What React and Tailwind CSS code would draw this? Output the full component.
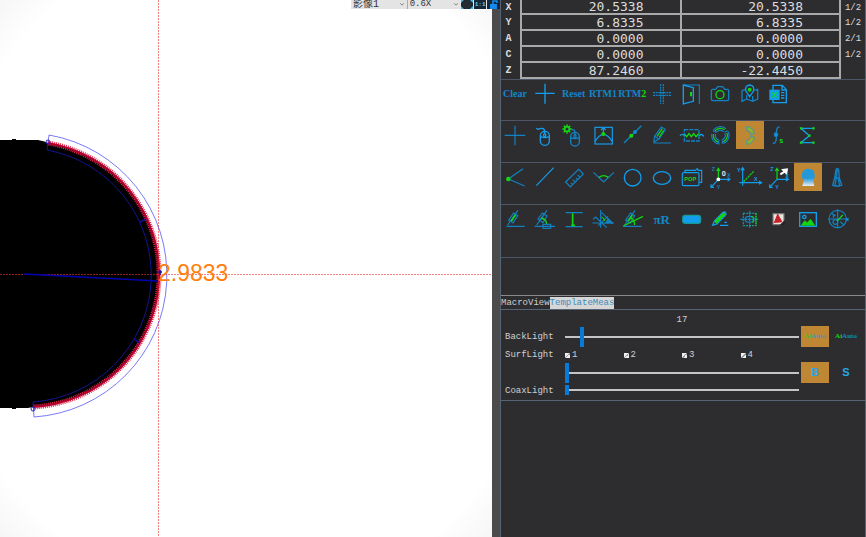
import React, { useState } from "react";

const B = "#1282c2";
const BRIGHT = "#129eec";
const G = "#12d812";

const axes = [
  { name: "X", a: "20.5338", b: "20.5338", ratio: "1/2" },
  { name: "Y", a: "6.8335", b: "6.8335", ratio: "1/2" },
  { name: "A", a: "0.0000", b: "0.0000", ratio: "2/1" },
  { name: "C", a: "0.0000", b: "0.0000", ratio: "1/2" },
  { name: "Z", a: "87.2460", b: "-22.4450", ratio: "" },
];

function Icon({ children, color = B, width = 3.5 }) {
  return (
    <svg viewBox="0 0 84 84" className="w-7 h-7 block" fill="none" stroke={color} strokeWidth={width}>
      {children}
    </svg>
  );
}

function Letter({ x, y, fill = BRIGHT, size = 16, children }) {
  return (
    <text x={x} y={y} fill={fill} stroke="none" fontSize={size} fontWeight="bold" fontFamily="Liberation Sans, sans-serif">
      {children}
    </text>
  );
}

// slanted gauge used by several of the angle tools
function Gauge() {
  return (
    <>
      <path d="M16 64H71M20 60L51 16" />
      <path d="M23 45L38 24L50 32L36 54Z" />
      <path d="M31 48L43 30" stroke={G} strokeWidth="5" />
    </>
  );
}

const rows = [
  [
    { label: "Clear", text: "Clear" },
    { label: "Cross", icon: <Icon color={BRIGHT} width={4}><path d="M16 40H74M45 11V71" /></Icon> },
    { label: "Reset", text: "Reset" },
    { label: "RTM1", text: "RTM1" },
    { label: "RTM2", text: "RTM", green: "2" },
    {
      label: "Grid cross",
      icon: (
        <Icon>
          <path d="M15 38H69M15 46H69M38 12V72M46 12V72" strokeDasharray="6 2" />
        </Icon>
      ),
    },
    {
      label: "Exit",
      icon: (
        <Icon>
          <path d="M20 15H67V72" />
          <path d="M19 15L49 23V64L19 72Z" stroke={BRIGHT} strokeWidth="4" />
          <path d="M42 36V49" stroke={G} strokeWidth="6" />
        </Icon>
      ),
    },
    {
      label: "Camera",
      icon: (
        <Icon width={4}>
          <path d="M20 28H29L35 20H50L56 28H64Q68 28 68 32V57Q68 62 63 62H21Q16 62 16 57V32Q16 28 20 28Z" />
          <circle cx="42" cy="44" r="12" stroke={G} />
        </Icon>
      ),
    },
    {
      label: "Map",
      icon: (
        <Icon width={4}>
          <path d="M28 28L18 32V64L32 57L50 64L65 57V28L55 31M32 57V46M50 64V48" />
          <path d="M41 50L30 34Q25 17 41 15Q57 17 52 34Z" stroke={BRIGHT} />
          <circle cx="41" cy="29" r="4" fill={G} stroke={G} />
        </Icon>
      ),
    },
    {
      label: "Export",
      icon: (
        <Icon color={BRIGHT} width={4}>
          <path d="M24 30V16H52L64 29V68H24V60M51 16V30H64M48 38H58M48 46H58M48 54H58" />
          <rect x="15" y="31" width="27" height="27" fill={BRIGHT} />
          <path d="M22 37L35 52M35 37L22 52" stroke={G} strokeWidth="4" />
        </Icon>
      ),
    },
  ],
  [
    { label: "Point", icon: <Icon><path d="M11 43H73M42 14V73" /></Icon> },
    {
      label: "Mouse",
      icon: (
        <Icon color={BRIGHT} width={4}>
          <rect x="31" y="31" width="27" height="42" rx="13" />
          <path d="M19 22Q24 27 29 23Q43 19 44 31V39M32 47Q45 53 57 47" />
          <rect x="41" y="38" width="6" height="9" rx="3" />
        </Icon>
      ),
    },
    {
      label: "Mouse light",
      icon: (
        <Icon width={4}>
          <rect x="32" y="34" width="26" height="41" rx="13" />
          <path d="M34 26Q44 24 45 34V42M33 50Q45 56 57 50" />
          <rect x="42" y="41" width="6" height="9" rx="3" />
          <circle cx="21" cy="24" r="7" stroke={G} strokeWidth="5" />
          <path d="M21 10V17M21 31V38M7 24H14M28 24H35M11 14L16 19M26 29L31 34M31 14L26 19M16 29L11 34" stroke={G} />
        </Icon>
      ),
    },
    {
      label: "Peak",
      icon: (
        <Icon color={BRIGHT}>
          <rect x="18" y="19" width="52" height="50" />
          <path d="M18 62Q43 18 70 62M43 19V36M36 27L43 20L50 27" />
          <circle cx="43" cy="39" r="4" fill={G} stroke={G} />
        </Icon>
      ),
    },
    {
      label: "Line point",
      icon: (
        <Icon width={4}>
          <path d="M18 66L70 14" />
          <circle cx="51" cy="33" r="4" fill={BRIGHT} />
          <circle cx="40" cy="44" r="4" fill={G} stroke={G} />
        </Icon>
      ),
    },
    {
      label: "Edge line",
      icon: (
        <Icon>
          <path d="M17 66H69M17 64L20 46L40 18L52 25L33 54L17 64M20 46L33 54" />
          <path d="M27 46L43 23M34 48L47 28" stroke={G} />
        </Icon>
      ),
    },
    {
      label: "Wave",
      icon: (
        <Icon width={4}>
          <rect x="22" y="26" width="44" height="34" strokeDasharray="12 3" />
          <path d="M9 44Q16 36 22 44M66 44Q74 36 80 46" stroke={BRIGHT} />
          <path d="M23 40L29 47L36 38L43 47L50 38L57 47L65 38" stroke={G} />
        </Icon>
      ),
    },
    {
      label: "Three arcs",
      icon: (
        <Icon>
          <circle cx="43" cy="43" r="26" strokeDasharray="43 11" transform="rotate(215 43 43)" />
          <circle cx="43" cy="43" r="15" strokeDasharray="25 6" transform="rotate(215 43 43)" />
          <circle cx="43" cy="43" r="21" stroke={G} strokeDasharray="32 12" transform="rotate(220 43 43)" />
          <path d="M21 29L30 34M65 29L56 34M38 68V59M49 68V59" />
        </Icon>
      ),
    },
    {
      label: "Arc scan",
      active: true,
      icon: (
        <Icon>
          <path d="M32 17Q50 18 56 37L45 41Q41 30 32 28Z" stroke="#5c9a86" />
          <path d="M32 70Q50 68 56 49L45 45Q41 56 32 59Z" stroke="#5c9a86" />
          <path d="M36 22Q46 25 50 35M36 65Q46 62 50 51" stroke="#7fc02c" strokeWidth="5" />
        </Icon>
      ),
    },
    {
      label: "Curve scan",
      icon: (
        <Icon width={4}>
          <path d="M44 19Q36 15 34 34V53Q32 70 23 66" />
          <circle cx="33" cy="41" r="5" fill={BRIGHT} />
          <Letter x={43} y={67} fill={G} size={22}>s</Letter>
        </Icon>
      ),
    },
    {
      label: "Sum",
      icon: (
        <Icon color={BRIGHT} width={4}>
          <path d="M59 22H21L46 44L21 65H59" />
          <path d="M18 22H25M55 22H62M43 44H50M18 65H25M55 65H62" stroke={G} strokeWidth="7" />
        </Icon>
      ),
    },
  ],
  [
    {
      label: "Vertex",
      icon: (
        <Icon>
          <path d="M22 48L66 17M22 48L71 69" />
          <circle cx="22" cy="48" r="5" fill={G} stroke={G} />
        </Icon>
      ),
    },
    { label: "Line", icon: <Icon color={BRIGHT}><path d="M19 68L71 14" /></Icon> },
    {
      label: "Ruler",
      icon: (
        <Icon>
          <path d="M17 57L56 19L70 33L31 72Z" />
          <path d="M38 65L33 60M46 57L38 50M53 50L48 45M60 43L53 36" />
        </Icon>
      ),
    },
    {
      label: "Angle",
      icon: (
        <Icon>
          <path d="M13 28L44 57L75 28" />
          <path d="M30 43Q44 33 58 43" stroke={G} strokeWidth="4" />
        </Icon>
      ),
    },
    { label: "Circle", icon: <Icon color={BRIGHT} width={4}><circle cx="44" cy="44" r="25" /></Icon> },
    { label: "Ellipse", icon: <Icon color={BRIGHT} width={4}><ellipse cx="42" cy="45" rx="26" ry="19" /></Icon> },
    {
      label: "Popup",
      icon: (
        <Icon color={BRIGHT}>
          <rect x="16" y="29" width="50" height="39" rx="4" />
          <path d="M24 28V22H55L61 17L64 22H74V58H67" />
          <Letter x={22} y={55} fill={G} size={17}>POP</Letter>
        </Icon>
      ),
    },
    {
      label: "Zero axes",
      icon: (
        <Icon color={BRIGHT}>
          <path d="M37 49V18M32 24L37 16L42 24" stroke={G} />
          <path d="M37 49H71M65 44L72 49L65 54M37 49L15 73M15 64V73H24" />
          <circle cx="37" cy="49" r="4" fill="white" stroke="white" />
          <Letter x={17} y={24} fill={B}>Z</Letter>
          <Letter x={63} y={42} fill={B}>X</Letter>
          <Letter x={32} y={79} fill={B}>Y</Letter>
          <Letter x={47} y={38} fill="#e8e8e8" size={22}>0</Letter>
        </Icon>
      ),
    },
    {
      label: "Axes",
      icon: (
        <Icon color={BRIGHT}>
          <path d="M20 68V15M15 22L20 14L25 22M10 59H76M69 54L77 59L69 64" />
          <path d="M23 56L53 25" stroke={G} strokeDasharray="7 2" />
          <Letter x={3} y={27}>Y</Letter>
          <Letter x={54} y={53}>X</Letter>
        </Icon>
      ),
    },
    {
      label: "Move axes",
      icon: (
        <Icon color={BRIGHT}>
          <path d="M36 49V18M31 24L36 16L41 24" stroke={G} />
          <path d="M36 49H69M63 44L70 49L63 54M36 49L14 73M14 64V73H23" />
          <path d="M46 34L60 25" stroke="white" strokeWidth="6" />
          <path d="M52 20L67 18L65 33Z" fill="white" stroke="white" />
          <Letter x={16} y={25}>Z</Letter>
          <Letter x={61} y={44}>X</Letter>
          <Letter x={31} y={79}>Y</Letter>
        </Icon>
      ),
    },
    {
      label: "Back light",
      active: true,
      icon: (
        <Icon>
          <defs>
            <linearGradient id="lamp" x1="0" y1="0" x2="0" y2="1">
              <stop offset="0.55" stopColor="#2598da" />
              <stop offset="1" stopColor="#e8eef0" />
            </linearGradient>
          </defs>
          <path d="M24 35Q24 17 43 17Q62 17 62 35V44L57 52L61 69H25L29 52L24 44Z" fill="url(#lamp)" stroke="none" />
        </Icon>
      ),
    },
    {
      label: "Probe",
      icon: (
        <Icon width={4}>
          <path d="M36 20Q41 13 44 20L46 45L53 66L45 69H33L26 66L32 45ZM40 20L37 45L33 67M43 45L46 67M32 45H46" />
        </Icon>
      ),
    },
  ],
  [
    { label: "Incline", icon: <Icon><Gauge /></Icon> },
    {
      label: "Incline box",
      icon: (
        <Icon>
          <path d="M14 64H75M20 60L51 16" />
          <path d="M24 42L37 24L51 33L39 53ZM30 45L43 27" />
          <path d="M33 39Q49 42 50 57" stroke={G} strokeWidth="4" />
          <rect x="39" y="58" width="23" height="12" />
        </Icon>
      ),
    },
    {
      label: "Height",
      icon: (
        <Icon>
          <path d="M17 23H68M17 65H68" />
          <path d="M38 25V63M34 61H45" stroke={G} strokeWidth="5" />
        </Icon>
      ),
    },
    {
      label: "Intersect",
      icon: (
        <Icon>
          <path d="M10 54H75M35 15V68M12 43L20 36L53 68M38 23L70 54M28 62L57 34" />
          <path d="M58 42L70 54H50Z" fill={B} />
          <path d="M38 36Q46 39 47 48" stroke={G} />
        </Icon>
      ),
    },
    {
      label: "Bisector",
      icon: (
        <Icon>
          <Gauge />
          <path d="M16 63L75 34M36 37Q50 44 50 60" stroke={G} strokeWidth="4" />
        </Icon>
      ),
    },
    { label: "Radius", big: "πR" },
    {
      label: "Slot",
      icon: (
        <Icon>
          <rect x="17" y="31" width="54" height="24" rx="8" fill={BRIGHT} stroke="#169a96" />
        </Icon>
      ),
    },
    {
      label: "Edit",
      icon: (
        <Icon color={BRIGHT} width={4}>
          <path d="M20 61L25 48L51 22L57 21L60 25L59 30L33 57ZM42 61H67M55 52H63" />
          <path d="M28 53L56 25" stroke={G} strokeWidth="9" />
        </Icon>
      ),
    },
    {
      label: "Align",
      icon: (
        <Icon>
          <path d="M13 43H68M41 17V68" strokeDasharray="9 2" />
          <rect x="22" y="25" width="38" height="37" strokeDasharray="6 3" stroke="#169a96" />
          <rect x="28" y="35" width="26" height="16" rx="7" />
          <path d="M46 35H52V51H46M60 25V62" stroke={G} strokeDasharray="5 2" />
        </Icon>
      ),
    },
    {
      label: "Report",
      icon: (
        <Icon>
          <rect x="24" y="26" width="33" height="33" fill="#e9e5df" stroke="#777" />
          <path d="M29 52L38 29L50 50Z" fill="#c8202a" stroke="#c8202a" />
          <path d="M47 60L58 49V60Z" fill="#222" stroke="#222" />
        </Icon>
      ),
    },
    {
      label: "Image",
      icon: (
        <Icon color={BRIGHT} width={4}>
          <rect x="17" y="23" width="50" height="41" />
          <path d="M22 61L32 47L39 53L50 43L62 61Z" fill={G} stroke={G} strokeWidth="2" />
          <circle cx="31" cy="36" r="5" />
        </Icon>
      ),
    },
    {
      label: "Compass",
      icon: (
        <Icon>
          <circle cx="41" cy="42" r="26" />
          <path d="M12 42H74M41 13V70M23 24L33 34M49 50L59 60M28 30H36M28 30V38" />
          <circle cx="34" cy="51" r="7" />
          <path d="M40 48L56 30" stroke={G} />
          <Letter x={66} y={48}>x</Letter>
        </Icon>
      ),
    },
  ],
];

function ToolButton({ tool }) {
  return (
    <button
      aria-label={tool.label}
      className={`w-7 h-7 flex items-center justify-center whitespace-nowrap font-bold font-['Liberation_Serif',serif] text-[#1286c8] ${tool.active ? "bg-[#bf8633]" : ""}`}
    >
      {tool.icon}
      {tool.text && (
        <span className="text-[10px] leading-none">
          {tool.text}
          {tool.green && <span className="text-[#12d812]">{tool.green}</span>}
        </span>
      )}
      {tool.big && <span className="text-[13px] leading-none">{tool.big}</span>}
    </button>
  );
}

function Slider({ label, value, onChange, small }) {
  return (
    <input
      type="range"
      min="0"
      max="255"
      aria-label={label}
      value={value}
      onChange={(e) => onChange(Number(e.target.value))}
      className={`block w-full appearance-none bg-transparent [&::-webkit-slider-runnable-track]:h-[2px] [&::-webkit-slider-runnable-track]:bg-[#c4c4c4] [&::-webkit-slider-thumb]:appearance-none [&::-webkit-slider-thumb]:w-1 [&::-webkit-slider-thumb]:bg-[#087ad8] ${
        small
          ? "h-[10px] [&::-webkit-slider-thumb]:h-[10px] [&::-webkit-slider-thumb]:-mt-1"
          : "h-5 [&::-webkit-slider-thumb]:h-5 [&::-webkit-slider-thumb]:-mt-[9px]"
      }`}
    />
  );
}

function Toolbar() {
  const select = "block appearance-none h-[9px] w-full leading-[9px] bg-[#e4e4e4] text-[#333] px-0.5";
  const box = "h-[9px] flex items-center justify-center overflow-hidden bg-[#14283a]";
  return (
    <div className="absolute top-0 right-0 w-[149px] h-[9px] flex gap-px bg-[#e4e4e4] font-['Liberation_Mono','Noto_Sans_CJK_SC',monospace]">
      <div className="relative w-[55px]">
        <select aria-label="Image" className={`${select} text-[10px]`}>
          <option>影像1</option>
        </select>
        <svg viewBox="0 0 6 4" className="absolute right-0.5 top-[3px] w-1 h-[3px]" fill="none" stroke="#555">
          <path d="M0 0L3 3L6 0" />
        </svg>
      </div>
      <div className="relative w-[54px] border-l border-[#aaa]">
        <select aria-label="Zoom" className={`${select} text-[9px]`}>
          <option>0.6X</option>
        </select>
        <svg viewBox="0 0 6 4" className="absolute right-0.5 top-[3px] w-1 h-[3px]" fill="none" stroke="#555">
          <path d="M0 0L3 3L6 0" />
        </svg>
      </div>
      <button aria-label="Fit" className={`${box} w-[12px]`}>
        <svg viewBox="0 0 12 9" className="w-3 h-[9px]">
          <path d="M0 0H3L0 3ZM12 0H9L12 3ZM0 9H3L0 6ZM12 9H9L12 6Z" fill="#4bb3d8" />
          <circle cx="6" cy="4.5" r="4.5" fill="#252c33" />
        </svg>
      </button>
      <button className={`${box} w-[12px] text-[6px] leading-[9px] font-bold text-[#7fc4dc]`}>1:1</button>
      <button aria-label="Lock" className={`${box} w-[13px]`}>
        <svg viewBox="0 0 13 9" className="w-[13px] h-[9px]">
          <rect x="3" y="4" width="7" height="5" fill="#148af0" />
          <path d="M6 4V1H10V3" fill="none" stroke="#148af0" strokeWidth="1.5" />
        </svg>
      </button>
    </div>
  );
}

function CameraView() {
  return (
    <div className="relative flex-1 min-w-0 flex bg-[#4b4b4c]">
      <div className="relative flex-1 overflow-hidden bg-[radial-gradient(ellipse_at_center,#ffffff_88%,#f6f6f6_100%)]">
        <svg className="absolute inset-0 w-full h-full" fill="none">
          <path d="M0 140H12V139H16V140H38Q44 141 48 143A133 133 0 0 1 33 407L28 408H16V409H12V408H0Z" fill="black" />
          <path d="M48 143A133 133 0 0 1 33 407" stroke="#e8284c" strokeWidth="5" strokeDasharray="1 1" />
          <path d="M48 143A133 133 0 0 1 33 407" stroke="#b40030" strokeWidth="2" />
          <path d="M0 274.5H492M158.5 0V537" stroke="#e83030" strokeOpacity="0.6" strokeDasharray="2 1" />
          <path d="M47 150A127.2 127.2 0 0 1 33 402L34 417A142.2 142.2 0 0 0 49 135Z" stroke="#2222f0" strokeOpacity="0.6" />
          <path d="M24 274L158 281" stroke="#0000b0" strokeWidth="1.5" />
          <path d="M140 222L146 219M134 339L140 343M157 272H162M160 270V275" stroke="#1010a0" strokeWidth="1.5" />
          <circle cx="48" cy="142" r="2" stroke="#2222c0" />
          <circle cx="33" cy="409" r="2" stroke="#2222c0" />
          <text x="158" y="281" fill="#ff7f0e" fontSize="23" fontFamily="Liberation Sans, sans-serif">
            2.9833
          </text>
        </svg>
      </div>
      <div className="w-2" />
      <Toolbar />
    </div>
  );
}

function Readout() {
  const cell = "border-2 border-t-0 border-[#a9a9a9] p-0 pr-9 text-right text-[13px] leading-none font-['DejaVu_Sans_Mono',monospace]";
  return (
    <table className="w-full table-fixed border-collapse text-[#dcdcdc] font-['Liberation_Mono',monospace]">
      <colgroup>
        <col className="w-5" />
        <col />
        <col />
        <col className="w-[25px]" />
      </colgroup>
      <tbody>
        {axes.map((axis) => (
          <tr key={axis.name} className="h-4 first:h-[14px]">
            <th className="p-0 pr-1 pt-0.5 text-[10px] leading-none font-bold">{axis.name}</th>
            <td className={cell}>{axis.a}</td>
            <td className={cell}>{axis.b}</td>
            <td className="p-0 pt-0.5 text-center text-[9px] leading-none">{axis.ratio}</td>
          </tr>
        ))}
      </tbody>
    </table>
  );
}

function LightPanel() {
  const [back, setBack] = useState(17);
  const [surf, setSurf] = useState(0);
  const [coax, setCoax] = useState(0);
  const [lamps, setLamps] = useState([true, true, true, true]);

  const toggle = (i) => setLamps(lamps.map((on, n) => (n === i ? !on : on)));

  return (
    <div className="h-[92px] shrink-0 border-y border-[#566475] px-1 pt-1 grid grid-cols-[58px_minmax(0,1fr)_28px_30px] grid-rows-[12px_21px_15px_21px_14px] items-center gap-x-[2px]">
      <span className="col-start-2 text-center">{back}</span>
      <span className="col-start-1 pt-0.5">BackLight</span>
      <Slider label="BackLight" value={back} onChange={setBack} />
      <button className="h-[21px] bg-[#bf8633] text-[7px] font-bold font-['Liberation_Serif',serif] text-[#4b9aa0]">
        <span className="text-[#4cc020]">Ai</span>Auto
      </button>
      <button className="h-[21px] text-[7px] font-bold font-['Liberation_Serif',serif] text-[#1286c8]">
        <span className="text-[#12d812]">Ai</span>Auto
      </button>

      <span className="col-start-1 pt-0.5">SurfLight</span>
      <div className="grid grid-cols-4 pt-0.5">
        {lamps.map((on, i) => (
          <label key={i} className="flex items-center gap-[2px]">
            <input
              type="checkbox"
              checked={on}
              onChange={() => toggle(i)}
              className="appearance-none w-[5px] h-[5px] bg-[#e8e8e8] checked:bg-[linear-gradient(135deg,#eee_45%,#999_45%,#999_60%,#eee_60%)]"
            />
            {i + 1}
          </label>
        ))}
      </div>

      <div className="col-start-2">
        <Slider label="SurfLight" value={surf} onChange={setSurf} />
      </div>
      <button className="h-[21px] bg-[#bf8633] text-[11px] font-bold font-['Liberation_Sans',sans-serif] text-[#28a8e8]">B</button>
      <button className="h-[21px] text-[11px] font-bold font-['Liberation_Sans',sans-serif] text-[#28a8e8]">S</button>

      <span className="col-start-1 pt-0.5">CoaxLight</span>
      <Slider label="CoaxLight" value={coax} onChange={setCoax} small />
    </div>
  );
}

function App() {
  const [tab, setTab] = useState("TemplateMeas");

  return (
    <div className="flex min-h-screen bg-[#2d2d30]">
      <CameraView />
      <div className="w-[366px] shrink-0 flex flex-col border-x border-[#566475] text-[9px] leading-[11px] text-[#d0d0d0] font-['Liberation_Mono',monospace]">
        <Readout />
        {rows.map((row, i) => (
          <div
            key={i}
            className={`grid grid-cols-12 pr-3 content-start border-t border-[#4c5466] ${i === 0 ? "h-[41px]" : i === 3 ? "h-[53px]" : "h-[42px]"}`}
          >
            {row.map((tool) => (
              <ToolButton key={tool.label} tool={tool} />
            ))}
          </div>
        ))}
        <div className="h-[38px] border-t border-[#4c5466]" />

        <div role="tablist" className="flex border-t border-[#8a8a8a] h-[14px] pt-px">
          {["MacroView", "TemplateMeas"].map((name) => (
            <button
              key={name}
              role="tab"
              aria-selected={tab === name}
              onClick={() => setTab(name)}
              className={`h-3 ${tab === name ? "bg-[#d6d6d6] text-[#3c8fc0]" : ""}`}
            >
              {name}
            </button>
          ))}
        </div>
        <LightPanel />
      </div>
    </div>
  );
}

export default App;
